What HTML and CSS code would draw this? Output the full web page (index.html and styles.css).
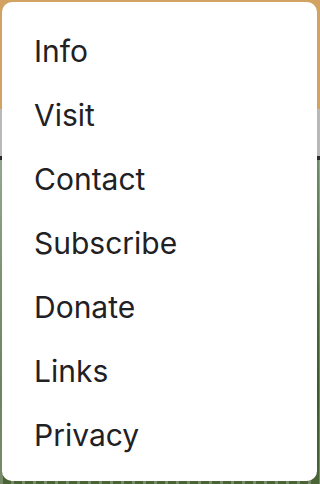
FILE: index.html
```html
<!DOCTYPE html>
<html>
<head>
<meta charset="utf-8">
<link rel="stylesheet" href="styles.css">
</head>
<body>
<div class="backdrop">
  <div class="band-tan"></div>
  <div class="band-grey"></div>
  <div class="band-line"></div>
  <div class="band-photo"></div>
</div>
<nav class="menu">
  <a class="item">Info</a>
  <a class="item">Visit</a>
  <a class="item">Contact</a>
  <a class="item">Subscribe</a>
  <a class="item">Donate</a>
  <a class="item">Links</a>
  <a class="item">Privacy</a>
</nav>
</body>
</html>
```

FILE: styles.css
```css
html, body {
  margin: 0;
  padding: 0;
  width: 320px;
  height: 484px;
  overflow: hidden;
}
body {
  position: relative;
  font-family: Inter, "Liberation Sans", sans-serif;
}
.backdrop {
  display: flex;
  flex-direction: column;
  height: 484px;
}
.band-tan { height: 109px; background: #d2a263; }
.band-grey { height: 47px; background: #b9b9b9; }
.band-line { height: 4px; background: #2a2a2a; }
.band-photo {
  flex: 1;
  background:
    repeating-linear-gradient(90deg, rgba(255,255,255,0.25) 0 3px, transparent 3px 11px),
    linear-gradient(180deg, #6f8a6a 0%, #4f6b3e 40%, #3e5a2c 70%, #4a6436 100%);
}
.menu {
  position: absolute;
  left: 2px;
  top: 2px;
  width: 315px;
  height: 479px;
  box-sizing: border-box;
  background: #fff;
  border-radius: 10px;
  display: flex;
  flex-direction: column;
  padding: 17px 0 0 32px;
}
.item {
  display: block;
  height: 64px;
  line-height: 64px;
  font-size: 30px;
  color: #1f2124;
  text-decoration: none;
}
```
